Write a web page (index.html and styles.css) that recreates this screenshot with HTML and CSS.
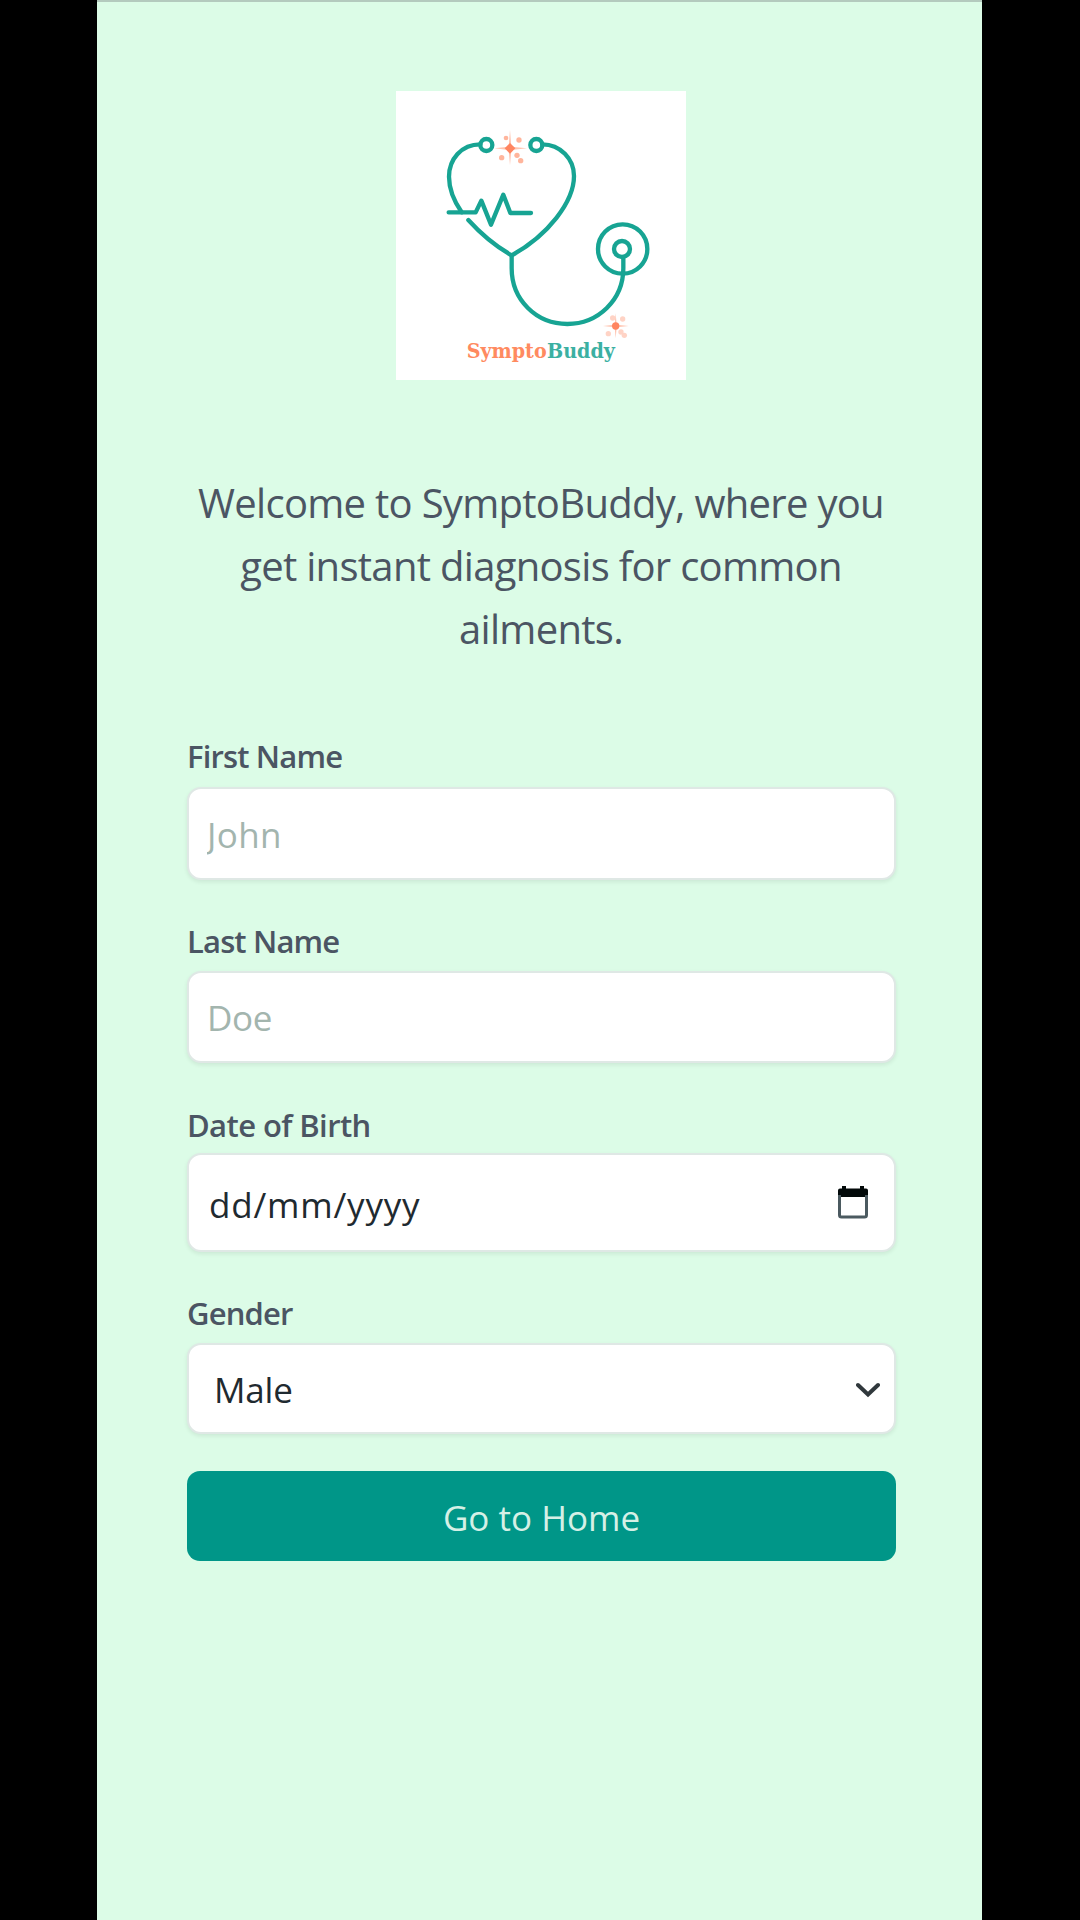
FILE: index.html
```html
<!DOCTYPE html>
<html lang="en">
<head>
<meta charset="utf-8">
<title>SymptoBuddy</title>
<link rel="stylesheet" href="styles.css">
</head>
<body>
<main class="screen">
  <svg class="logo" viewBox="19 33 870 867" preserveAspectRatio="none" role="img" aria-label="SymptoBuddy">
    <g class="logo-line">
      <circle cx="290" cy="195" r="18"/>
      <circle cx="440" cy="195" r="18"/>
      <path d="M272 193C215 193 178 238 178 290C178 328 195 366 216 397"/>
      <path d="M458 193C512 193 553 237 553 288C553 365 475 466 366 526C322 501 275 463 236 420"/>
      <path d="M177 397H258L275 362L304 434L341 344L362 399H424"/>
      <path d="M366 526V565C366 660 440 732 533 732C625 732 701 660 701 565V532"/>
      <circle cx="699" cy="507" r="74"/>
      <circle cx="697" cy="507" r="24"/>
    </g>
    <g class="spark">
      <path class="spark-ray" d="M361 150L365 200L412 205L365 210L361 256L357 210L314 205L357 200Z"/>
      <path class="spark-core" d="M361 189L377 205L361 221L345 205Z"/>
      <g class="spark-dots"><circle cx="349" cy="174" r="7"/><circle cx="388" cy="180" r="8"/><circle cx="336" cy="233" r="8"/><circle cx="382" cy="226" r="8"/><circle cx="393" cy="242" r="8"/></g>
    </g>
    <g class="spark">
      <path class="spark-ray" d="M678 700L681 734L717 738L681 742L678 775L675 742L640 738L675 734Z"/>
      <circle class="spark-core" cx="678" cy="738" r="11"/>
      <g class="spark-dots faint"><circle cx="669" cy="714" r="8"/><circle cx="699" cy="717" r="8"/><circle cx="656" cy="761" r="8"/><circle cx="694" cy="756" r="8"/><circle cx="704" cy="766" r="8"/></g>
    </g>
    <text class="wordmark" y="835"><tspan class="wordmark-a" x="231" textLength="240" lengthAdjust="spacingAndGlyphs">Sympto</tspan><tspan class="wordmark-b" x="472" textLength="204" lengthAdjust="spacingAndGlyphs">Buddy</tspan></text>
  </svg>

  <p class="intro">Welcome to SymptoBuddy, where you<br>get instant diagnosis for common<br>ailments.</p>

  <form class="form">
    <div class="field first">
      <label class="label" for="first">First Name</label>
      <input class="control" id="first" placeholder="John">
    </div>
    <div class="field last">
      <label class="label" for="last">Last Name</label>
      <input class="control" id="last" placeholder="Doe">
    </div>
    <div class="field birth">
      <span class="label">Date of Birth</span>
      <div class="control">
        <span class="date">dd/mm/yyyy</span>
        <svg class="calendar" viewBox="0 0 30 34"><path class="calendar-top" d="M0 4.500Q0 2.500 2 2.500H4V0H8V2.500H22V0H26V2.500H28Q30 2.500 30 4.500V11H0Z"/><path class="calendar-box" d="M1.500 9V29Q1.500 31 3.500 31H26.500Q28.500 31 28.500 29V9"/></svg>
      </div>
    </div>
    <div class="field gender">
      <span class="label">Gender</span>
      <div class="control">
        <span class="choice">Male</span>
        <svg class="chevron" viewBox="0 0 24 16"><path d="M2 3L12 12.500L22 3"/></svg>
      </div>
    </div>
    <button class="submit" type="button">Go to Home</button>
  </form>
</main>
</body>
</html>
```
FILE: styles.css
```css
* { box-sizing: border-box; }

body {
  margin: 0;
  background: #000;
  font-family: "Open Sans", "Noto Sans", sans-serif;
}

.screen {
  width: 885px;
  height: 1920px;
  margin-left: 97px;
  padding: 89px 87px 0 90px;
  border-top: 2px solid #b4cabe;
  background: #dcfce7;
}

.logo {
  display: block;
  width: 290px;
  height: 289px;
  margin-left: 209px;
  background: #fff;
}

.logo-line {
  fill: none;
  stroke: #17a493;
  stroke-width: 13;
  stroke-linecap: round;
  stroke-linejoin: round;
}

.spark-ray { fill: #ffc4b0; }
.spark-core { fill: #ff8560; }
.spark-dots { fill: #ffb59c; }
.faint { fill: #ffd3c5; }

.wordmark {
  font: bold 63px "DejaVu Serif", serif;
}
.wordmark-a { fill: #ff8a60; }
.wordmark-b { fill: #3bb0a2; }

.intro {
  margin: 91px 0 0;
  color: #4b5563;
  font-size: 40px;
  line-height: 63px;
  letter-spacing: -0.7px;
  text-align: center;
  white-space: nowrap;
}

.form { display: flex; flex-direction: column; }

.field { display: flex; flex-direction: column; }
.first { margin-top: 75px; }
.last { margin-top: 40px; }
.birth { margin-top: 41px; }
.gender { margin-top: 40px; }

.label {
  height: 52px;
  color: #4b5563;
  font-size: 31px;
  font-weight: 600;
  line-height: 42px;
  letter-spacing: -0.85px;
}
.last .label { height: 51px; }
.birth .label { height: 49px; letter-spacing: -0.6px; }
.gender .label { height: 51px; }

.control {
  display: flex;
  align-items: center;
  justify-content: space-between;
  width: 709px;
  height: 93px;
  padding: 1px 18px 0;
  border: 2px solid #dfe8e5;
  border-radius: 14px;
  background: #fff;
  box-shadow: 0 2px 4px rgba(0, 0, 0, 0.08);
  color: #1f2a30;
  font-family: inherit;
  font-size: 35px;
  letter-spacing: -0.4px;
}
.last .control { height: 92px; }
.control::placeholder { color: #a3b5ae; opacity: 1; }
#first { letter-spacing: 0.4px; }

.birth .control { height: 99px; padding: 4px 26px 0 20px; }
.gender .control { height: 91px; padding: 2px 14px 0 25px; }
.date { letter-spacing: 0.8px; }
.choice { letter-spacing: -0.2px; }

.calendar { width: 30px; height: 34px; margin-bottom: 4px; }
.calendar-top { fill: #020909; }
.calendar-box { fill: none; stroke: #4b5a60; stroke-width: 3; }

.chevron {
  width: 24px;
  height: 16px;
  fill: none;
  stroke: #30383c;
  stroke-width: 4;
  stroke-linecap: round;
}

.submit {
  width: 709px;
  height: 90px;
  margin-top: 37px;
  padding: 3px 0 0;
  border: 0;
  border-radius: 13px;
  background: #009688;
  color: #d5f0e6;
  font-family: inherit;
  font-size: 35px;
  letter-spacing: 0;
}
```
